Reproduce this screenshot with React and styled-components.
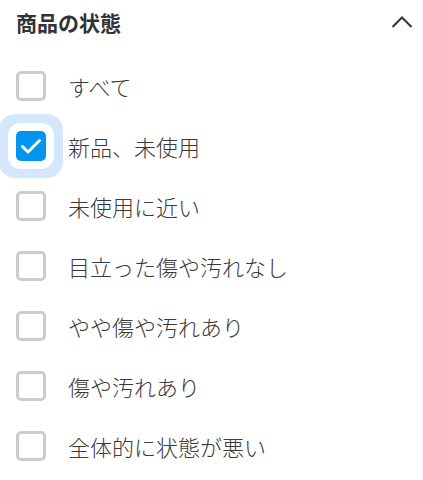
import React, { useState } from "react";
import styled, { createGlobalStyle } from "styled-components";

const GlobalStyle = createGlobalStyle`
    html, body {
        margin: 0;
        padding: 0;
        background: #fff;
    }

    body {
        font-family: "Noto Sans CJK JP", "Noto Sans", sans-serif;
        color: #333;
    }
`

const Panel = styled.section`
    width: 423px;
    padding: 0 16px;
    box-sizing: border-box;
`

const Header = styled.div`
    height: 44px;
    display: flex;
    align-items: center;
    justify-content: space-between;

    h2 {
        margin: 0;
        font-size: 21px;
        font-weight: 700;
        color: #333;
        line-height: 1;
    }
`

const Toggle = styled.button`
    border: 0;
    padding: 0;
    margin-right: -6px;
    background: none;
    display: flex;
    cursor: pointer;
`

const List = styled.ul`
    list-style: none;
    margin: 12px 0 0 0;
    padding: 0;
`

const Row = styled.li`
    height: 60px;
    display: flex;
    align-items: center;
    gap: 22px;
    cursor: pointer;
`

const Box = styled.span`
    width: 30px;
    height: 30px;
    box-sizing: border-box;
    flex-shrink: 0;
    border-radius: 5px;
    border: ${props => props.checked ? "none" : "3px solid #cccccc"};
    background: ${props => props.checked ? "#0095ee" : "#fff"};
    box-shadow: ${props => props.checked ? "0 0 0 8px #fff, 0 0 0 17px #d5e8fb" : "none"};
    display: flex;
    align-items: center;
    justify-content: center;
`

const Label = styled.span`
    font-size: 22px;
    font-weight: 300;
    color: #3a3a3a;
    line-height: 1;
`

const options = [
    "すべて",
    "新品、未使用",
    "未使用に近い",
    "目立った傷や汚れなし",
    "やや傷や汚れあり",
    "傷や汚れあり",
    "全体的に状態が悪い",
]

const App = () => {

    const [selected, setSelected] = useState([1])

    const toggle = (idx) => {
        setSelected(selected.includes(idx) ? selected.filter(i => i !== idx) : [...selected, idx])
    }

    return (
        <>
            <GlobalStyle />
            <Panel>
                <Header>
                    <h2>商品の状態</h2>
                    <Toggle aria-label="閉じる">
                        <svg width="22" height="14" viewBox="0 0 22 14">
                            <polyline points="1.5,12 11,2.5 20.5,12" fill="none" stroke="#333" strokeWidth="2" />
                        </svg>
                    </Toggle>
                </Header>
                <List>
                    {options.map((opt, idx) => {
                        const checked = selected.includes(idx)
                        return (
                            <Row key={opt} onClick={() => toggle(idx)}>
                                <Box checked={checked}>
                                    {checked &&
                                        <svg width="30" height="30" viewBox="0 0 30 30">
                                            <polyline points="6.5,15.5 12,21 23.5,9.5" fill="none" stroke="#fff"
                                                strokeWidth="3" strokeLinecap="round" strokeLinejoin="round" />
                                        </svg>}
                                </Box>
                                <Label>{opt}</Label>
                            </Row>
                        )
                    })}
                </List>
            </Panel>
        </>
    )
}

export default App;
